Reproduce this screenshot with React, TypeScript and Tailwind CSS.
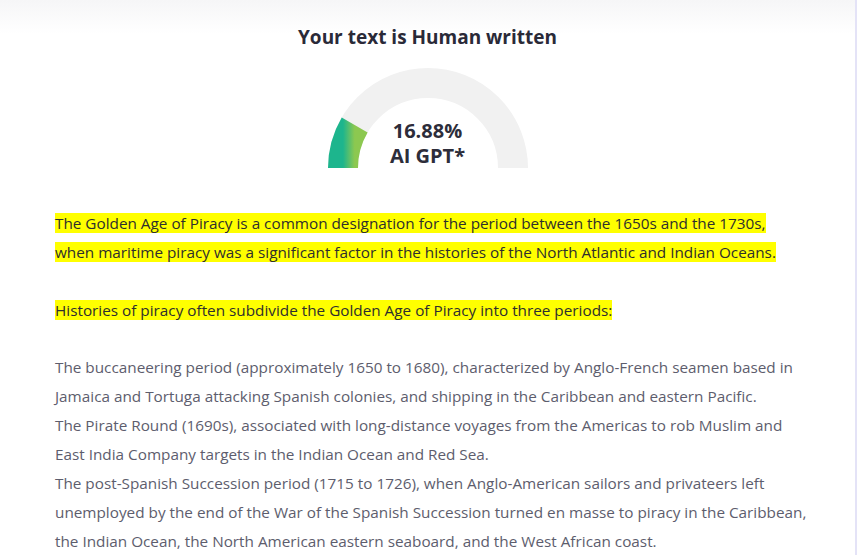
export default function App() {
  const pct = 16.88;
  const angle = (pct / 100) * Math.PI;
  const r = 85;
  const ex = 100 - r * Math.cos(angle);
  const ey = 100 - r * Math.sin(angle);

  return (
    <div className="min-h-screen w-full bg-white bg-[linear-gradient(to_bottom,#f6f6f7,#ffffff_34px)] border-r-2 border-[#e4e3f7] font-['Open_Sans',sans-serif]">
      <div className="pt-[24px] flex flex-col items-center">
        <h1 className="text-[19px] leading-[26px] font-bold text-[#2a2a38]">Your text is Human written</h1>
        <div className="relative mt-[18px] w-[200px] h-[100px]">
          <svg width="200" height="100" viewBox="0 0 200 100">
            <defs>
              <linearGradient id="g" x1="0" y1="0" x2="1" y2="0">
                <stop offset="0%" stopColor="#1db58d" />
                <stop offset="100%" stopColor="#8cc850" />
              </linearGradient>
            </defs>
            <path d="M 15 100 A 85 85 0 0 1 185 100" fill="none" stroke="#f1f1f1" strokeWidth="30" />
            <path d={`M 15 100 A 85 85 0 0 1 ${ex} ${ey}`} fill="none" stroke="url(#g)" strokeWidth="30" />
          </svg>
          <div className="absolute left-0 right-0 top-[50px] flex flex-col items-center text-[20px] leading-[25px] font-bold text-[#2d2d3a]">
            <span>{pct}%</span>
            <span>AI GPT*</span>
          </div>
        </div>
      </div>
      <div className="pl-[55px] pr-[20px] pt-[41px] text-[15.3px] leading-[29px]">
        <p className="text-[#2e2e2e]">
          <span className="bg-[#ffff00]">
            The Golden Age of Piracy is a common designation for the period between the 1650s and the 1730s,
            <br />
            when maritime piracy was a significant factor in the histories of the North Atlantic and Indian Oceans.
          </span>
        </p>
        <p className="mt-[29px] text-[#2e2e2e]">
          <span className="bg-[#ffff00]">Histories of piracy often subdivide the Golden Age of Piracy into three periods:</span>
        </p>
        <div className="mt-[28px] text-[#5d5d6d]">
          <p>
            The buccaneering period (approximately 1650 to 1680), characterized by Anglo-French seamen based in
            <br />
            Jamaica and Tortuga attacking Spanish colonies, and shipping in the Caribbean and eastern Pacific.
          </p>
          <p>
            The Pirate Round (1690s), associated with long-distance voyages from the Americas to rob Muslim and
            <br />
            East India Company targets in the Indian Ocean and Red Sea.
          </p>
          <p>
            The post-Spanish Succession period (1715 to 1726), when Anglo-American sailors and privateers left
            <br />
            unemployed by the end of the War of the Spanish Succession turned en masse to piracy in the Caribbean,
            <br />
            the Indian Ocean, the North American eastern seaboard, and the West African coast.
          </p>
        </div>
      </div>
    </div>
  );
}
